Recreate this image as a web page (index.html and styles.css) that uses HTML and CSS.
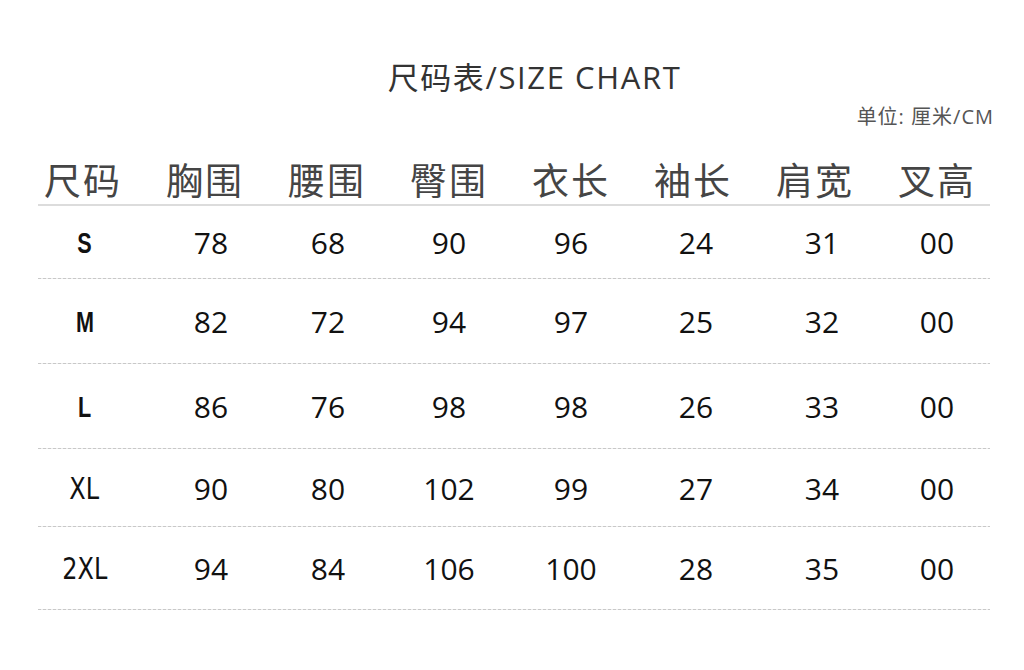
FILE: index.html
```html
<!DOCTYPE html>
<html lang="zh">
<head>
<meta charset="utf-8">
<title>尺码表/SIZE CHART</title>
<link rel="stylesheet" href="styles.css">
</head>
<body>
<div class="page">
  <h1 class="title">尺码表/SIZE CHART</h1>
  <div class="unit">单位: 厘米/CM</div>
  <div class="table">
    <div class="row head">
      <span>尺码</span><span>胸围</span><span>腰围</span><span>臀围</span><span>衣长</span><span>袖长</span><span>肩宽</span><span>叉高</span>
    </div>
    <div class="row r1">
      <span class="size bold">S</span><span>78</span><span>68</span><span>90</span><span>96</span><span>24</span><span>31</span><span>00</span>
    </div>
    <div class="row r2">
      <span class="size bold">M</span><span>82</span><span>72</span><span>94</span><span>97</span><span>25</span><span>32</span><span>00</span>
    </div>
    <div class="row r3">
      <span class="size bold">L</span><span>86</span><span>76</span><span>98</span><span>98</span><span>26</span><span>33</span><span>00</span>
    </div>
    <div class="row r4">
      <span class="size">XL</span><span>90</span><span>80</span><span>102</span><span>99</span><span>27</span><span>34</span><span>00</span>
    </div>
    <div class="row r5">
      <span class="size">2XL</span><span>94</span><span>84</span><span>106</span><span>100</span><span>28</span><span>35</span><span>00</span>
    </div>
  </div>
</div>
</body>
</html>
```

FILE: styles.css
```css
* { box-sizing: border-box; }
html, body {
  margin: 0;
  padding: 0;
  background: #fff;
}
body {
  width: 1024px;
  height: 670px;
  overflow: hidden;
  font-family: "Open Sans", "Noto Sans CJK SC", sans-serif;
  color: #222;
}
.page {
  padding-top: 57px;
}
.title {
  margin: 0;
  text-align: center;
  font-family: "Open Sans", "Noto Sans CJK SC", sans-serif;
  font-weight: 400;
  font-size: 31px;
  line-height: 40px;
  color: #333;
  padding-left: 45px;
  letter-spacing: 1.6px;
}
.unit {
  text-align: right;
  padding-right: 30px;
  font-family: "Open Sans", "Noto Sans CJK SC", sans-serif;
  font-size: 20px;
  line-height: 24px;
  letter-spacing: 1px;
  color: #555;
  margin-top: 8px;
}
.table {
  margin-left: 22px;
  width: 976px;
  margin-top: 23px;
}
.row {
  display: grid;
  grid-template-columns: repeat(8, 122px);
  align-items: center;
  justify-items: center;
  background-repeat: no-repeat;
  background-position: 16px 100%;
  background-size: 952px 1px;
  background-image: repeating-linear-gradient(90deg, #c8c8c8 0 3px, #eee 3px 5px);
}
.head {
  height: 54px;
  font-family: "Noto Sans CJK SC", sans-serif;
  background-image: linear-gradient(#dcdcdc, #dcdcdc);
  background-size: 952px 2px;
}
.r1 { height: 73px; }
.r2 { height: 85px; }
.r3 { height: 85px; }
.r4 { height: 78px; }
.r5 { height: 83px; }
.row span {
  font-size: 30px;
  color: #111;
}
.head span {
  font-size: 37px;
  color: #454545;
  letter-spacing: 2px;
}
.row .size {
  font-family: "DejaVu Sans", sans-serif;
  font-weight: 400;
  font-size: 30px;
  color: #111;
  transform: scaleX(0.8);
  padding-left: 4px;
}
.row .size.bold {
  font-family: "Liberation Sans", Arial, sans-serif;
  font-weight: 700;
  font-size: 30px;
  transform: scaleX(0.72);
}
.row:not(.head) span:nth-child(2) { padding-left: 12px; }
.row:not(.head) span:nth-child(3) { padding-left: 2px; }
.row:not(.head) span:nth-child(6) { padding-left: 6px; }
.row:not(.head) span:nth-child(7) { padding-left: 14px; }
```
